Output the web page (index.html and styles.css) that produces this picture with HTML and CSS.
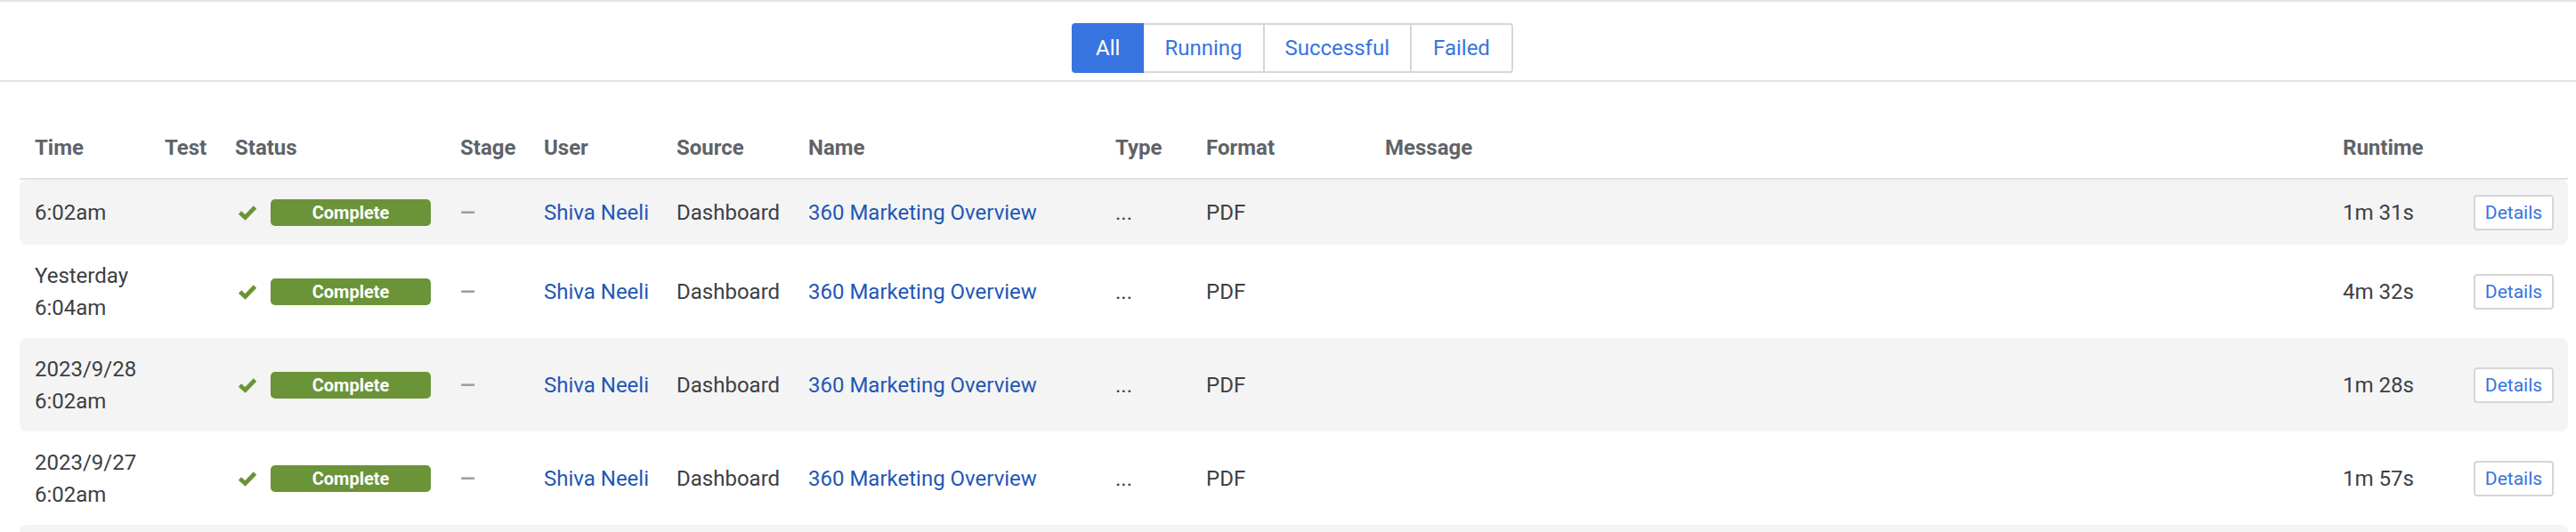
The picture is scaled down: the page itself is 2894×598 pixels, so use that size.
FILE: index.html
```html
<!DOCTYPE html>
<html lang="en">
<head>
<meta charset="utf-8">
<title>Schedule history</title>
<link rel="stylesheet" href="styles.css">
</head>
<body>
<div class="toolbar">
  <div class="segmented">
    <button class="seg active">All</button>
    <button class="seg">Running</button>
    <button class="seg">Successful</button>
    <button class="seg">Failed</button>
  </div>
</div>
<div class="content">
  <table class="runs">
    <colgroup>
      <col class="c-time"><col class="c-test"><col class="c-status"><col class="c-stage"><col class="c-user"><col class="c-source"><col class="c-name"><col class="c-type"><col class="c-format"><col class="c-message"><col class="c-runtime"><col class="c-details">
    </colgroup>
    <thead>
      <tr>
        <th>Time</th><th>Test</th><th>Status</th><th>Stage</th><th>User</th><th>Source</th><th>Name</th><th>Type</th><th>Format</th><th>Message</th><th>Runtime</th><th></th>
      </tr>
    </thead>
    <tbody>
      <tr class="shaded">
        <td>6:02am</td><td></td>
        <td><div class="status"><svg class="check" width="22" height="18" viewBox="0 0 22 18"><polyline points="2.5,9 8.5,14.5 19.5,3" fill="none" stroke="#6b9337" stroke-width="4.8" stroke-linejoin="miter"/></svg><span class="badge">Complete</span></div></td>
        <td><span class="dash">—</span></td>
        <td><a class="link" href="#">Shiva Neeli</a></td><td>Dashboard</td>
        <td><a class="link" href="#">360 Marketing Overview</a></td>
        <td>...</td><td>PDF</td><td></td><td>1m 31s</td>
        <td><button class="details">Details</button></td>
      </tr>
      <tr>
        <td>Yesterday<br>6:04am</td><td></td>
        <td><div class="status"><svg class="check" width="22" height="18" viewBox="0 0 22 18"><polyline points="2.5,9 8.5,14.5 19.5,3" fill="none" stroke="#6b9337" stroke-width="4.8" stroke-linejoin="miter"/></svg><span class="badge">Complete</span></div></td>
        <td><span class="dash">—</span></td>
        <td><a class="link" href="#">Shiva Neeli</a></td><td>Dashboard</td>
        <td><a class="link" href="#">360 Marketing Overview</a></td>
        <td>...</td><td>PDF</td><td></td><td>4m 32s</td>
        <td><button class="details">Details</button></td>
      </tr>
      <tr class="shaded">
        <td>2023/9/28<br>6:02am</td><td></td>
        <td><div class="status"><svg class="check" width="22" height="18" viewBox="0 0 22 18"><polyline points="2.5,9 8.5,14.5 19.5,3" fill="none" stroke="#6b9337" stroke-width="4.8" stroke-linejoin="miter"/></svg><span class="badge">Complete</span></div></td>
        <td><span class="dash">—</span></td>
        <td><a class="link" href="#">Shiva Neeli</a></td><td>Dashboard</td>
        <td><a class="link" href="#">360 Marketing Overview</a></td>
        <td>...</td><td>PDF</td><td></td><td>1m 28s</td>
        <td><button class="details">Details</button></td>
      </tr>
      <tr>
        <td>2023/9/27<br>6:02am</td><td></td>
        <td><div class="status"><svg class="check" width="22" height="18" viewBox="0 0 22 18"><polyline points="2.5,9 8.5,14.5 19.5,3" fill="none" stroke="#6b9337" stroke-width="4.8" stroke-linejoin="miter"/></svg><span class="badge">Complete</span></div></td>
        <td><span class="dash">—</span></td>
        <td><a class="link" href="#">Shiva Neeli</a></td><td>Dashboard</td>
        <td><a class="link" href="#">360 Marketing Overview</a></td>
        <td>...</td><td>PDF</td><td></td><td>1m 57s</td>
        <td><button class="details">Details</button></td>
      </tr>
      <tr class="shaded">
        <td>2023/9/26<br>6:02am</td><td></td>
        <td><div class="status"><svg class="check" width="22" height="18" viewBox="0 0 22 18"><polyline points="2.5,9 8.5,14.5 19.5,3" fill="none" stroke="#6b9337" stroke-width="4.8" stroke-linejoin="miter"/></svg><span class="badge">Complete</span></div></td>
        <td><span class="dash">—</span></td>
        <td><a class="link" href="#">Shiva Neeli</a></td><td>Dashboard</td>
        <td><a class="link" href="#">360 Marketing Overview</a></td>
        <td>...</td><td>PDF</td><td></td><td>1m 40s</td>
        <td><button class="details">Details</button></td>
      </tr>
    </tbody>
  </table>
</div>
</body>
</html>
```
FILE: styles.css
```css
* { box-sizing: border-box; }
html, body {
  margin: 0;
  padding: 0;
  background: #ffffff;
  font-family: Roboto, "Liberation Sans", Arial, sans-serif;
  color: #3c4043;
}
.toolbar {
  border-top: 2px solid #e3e3e6;
  border-bottom: 2px solid #e3e3e6;
  padding: 24px 0 8px;
  display: flex;
  justify-content: center;
}
.segmented {
  display: flex;
  margin-left: 10px;
}
.seg {
  font-family: Roboto, "Liberation Sans", Arial, sans-serif;
  font-size: 24px;
  line-height: 28px;
  height: 56px;
  padding: 0 23px;
  margin: 0;
  background: #ffffff;
  color: #3874e0;
  border: 2px solid #d6d6d6;
  border-left-width: 0;
  cursor: pointer;
}
.seg:first-child {
  border-left-width: 2px;
  border-radius: 4px 0 0 4px;
  padding: 0 25px;
}
.seg:last-child {
  border-radius: 0 4px 4px 0;
  padding: 0 24px;
}
.seg.active {
  background: #3874e0;
  border-color: #3874e0;
  color: #ffffff;
}
.content {
  padding: 40px 9px 0 22px;
}
.runs {
  width: 2863px;
  table-layout: fixed;
  border-collapse: separate;
  border-spacing: 0;
  font-size: 24px;
  line-height: 36px;
}
.c-time { width: 146px; }
.c-test { width: 79px; }
.c-status { width: 253px; }
.c-stage { width: 94px; }
.c-user { width: 149px; }
.c-source { width: 148px; }
.c-name { width: 345px; }
.c-type { width: 102px; }
.c-format { width: 201px; }
.c-message { width: 1076px; }
.c-runtime { width: 147px; }
.c-details { width: 123px; }
.runs th {
  text-align: left;
  font-weight: 700;
  color: #5f6368;
  padding: 16px 16px 16px 17px;
  border-bottom: 2px solid #e0e0e6;
  white-space: nowrap;
}
.runs td {
  padding: 17px 16px 16px 17px;
  vertical-align: middle;
  white-space: nowrap;
}
.runs tr.shaded td { background: #f4f4f4; }
.runs tr.shaded td:first-child { border-radius: 8px 0 0 8px; }
.runs tr.shaded td:last-child { border-radius: 0 8px 8px 0; }
.status {
  display: flex;
  align-items: center;
}
.check {
  margin-left: 3px;
  margin-right: 15px;
}
.badge {
  display: inline-block;
  width: 180px;
  height: 30px;
  line-height: 30px;
  border-radius: 5px;
  background: #6b9337;
  color: #ffffff;
  font-size: 20px;
  font-weight: 700;
  text-align: center;
}
.dash {
  color: #9aa0a6;
  font-size: 22px;
  font-weight: 700;
}
.link {
  color: #1f57b5;
  text-decoration: none;
}
.details {
  font-family: Roboto, "Liberation Sans", Arial, sans-serif;
  font-size: 21px;
  line-height: 24px;
  width: 90px;
  height: 40px;
  padding: 0;
  margin: 0;
  background: #ffffff;
  color: #3874e0;
  border: 2px solid #d6d6d6;
  border-radius: 4px;
  display: block;
  cursor: pointer;
}
```
